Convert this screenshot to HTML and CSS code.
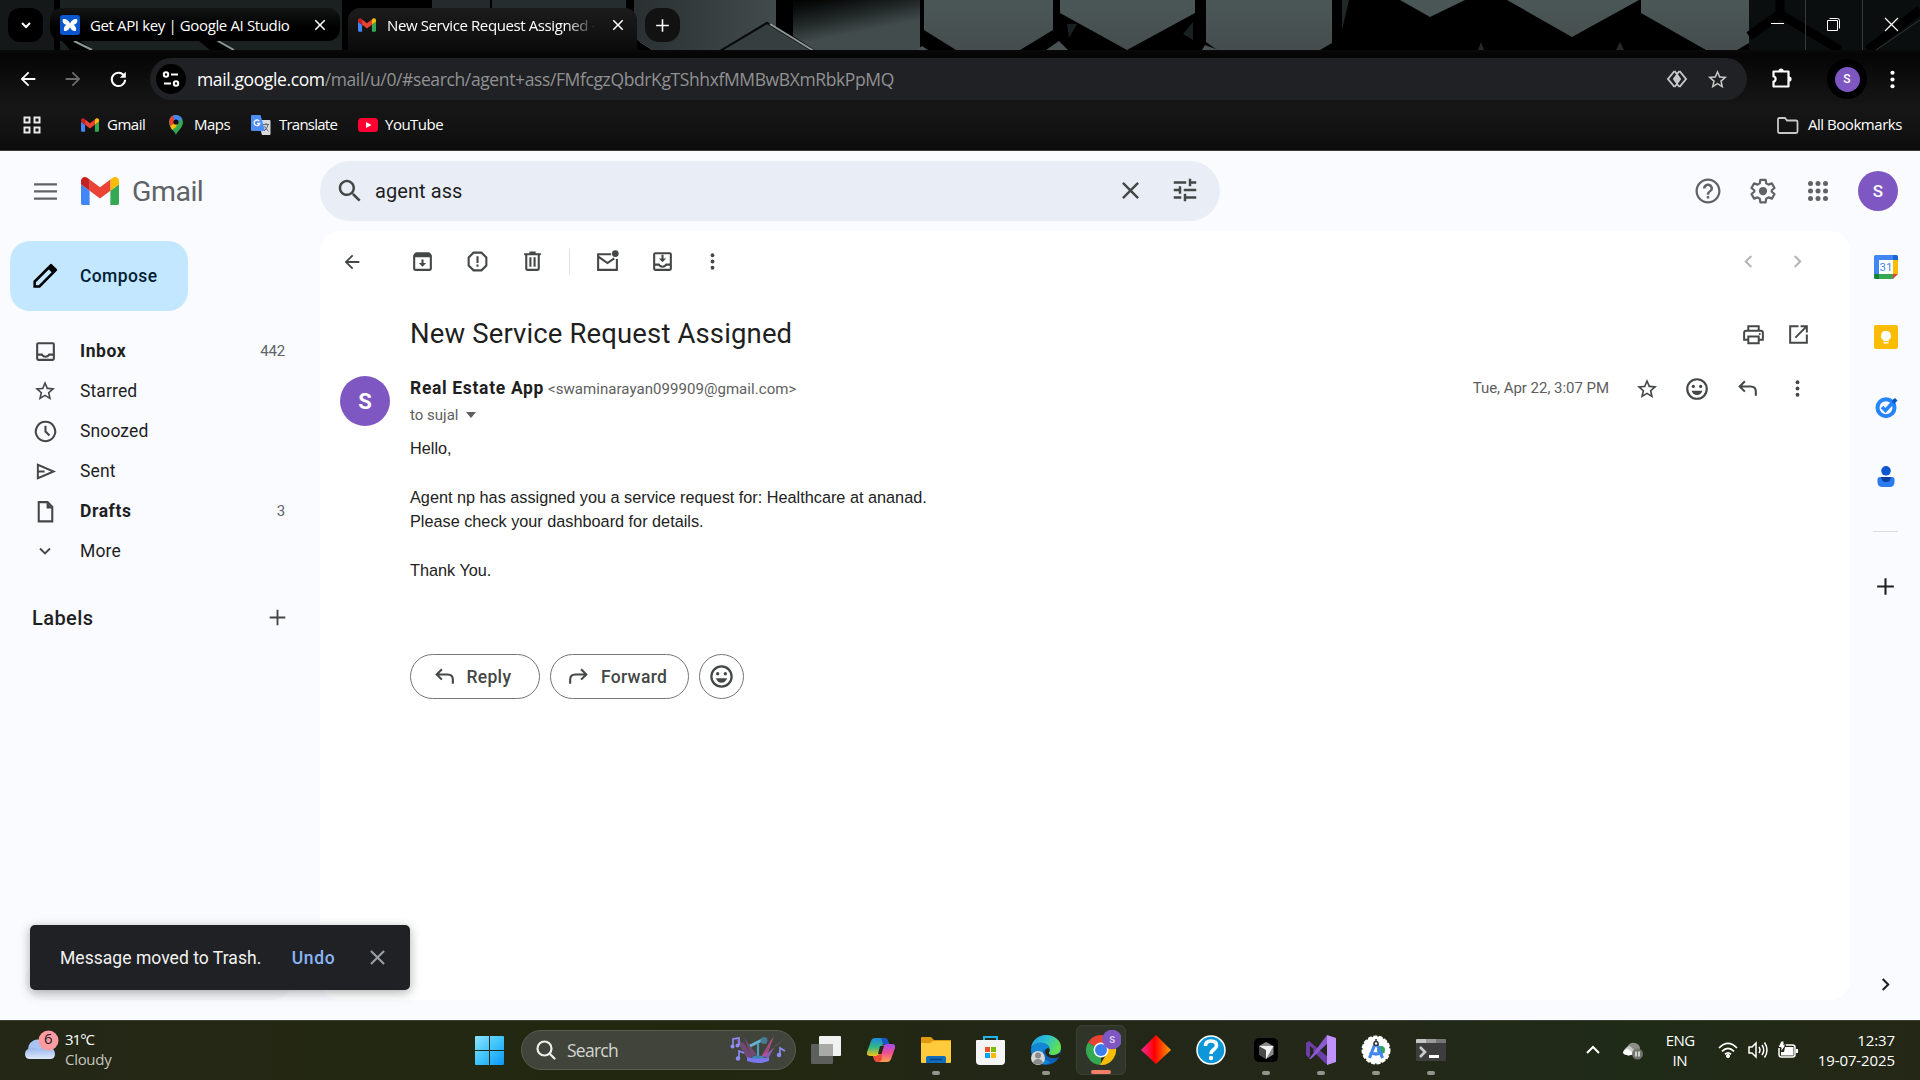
FILE: index.html
```html
<!DOCTYPE html>
<html lang="en">
<head>
<meta charset="utf-8">
<title>New Service Request Assigned - Gmail</title>
<link rel="stylesheet" href="styles.css">
</head>
<body>
<svg class="defs" width="0" height="0">
  <defs>
    <symbol id="gmail" viewBox="52 42 88 66">
      <path fill="#4285f4" d="M58 108h14V74L52 59v43c0 3.32 2.69 6 6 6"/><path fill="#34a853" d="M120 108h14c3.32 0 6-2.69 6-6V59l-20 15"/><path fill="#fbbc04" d="M120 48v26l20-15v-8c0-7.42-8.47-11.65-14.4-7.2"/><path fill="#ea4335" d="M72 74V48l24 18 24-18v26L96 92"/><path fill="#c5221f" d="M52 51v8l20 15V48l-5.6-4.2c-5.94-4.45-14.4-.22-14.4 7.2"/>
    </symbol>
    <symbol id="close" viewBox="0 0 24 24"><path d="M19 6.41 17.59 5 12 10.59 6.41 5 5 6.41 10.59 12 5 17.59 6.41 19 12 13.41 17.59 19 19 17.59 13.41 12z"/></symbol>
    <symbol id="star" viewBox="0 0 24 24"><path d="M22 9.24l-7.19-.62L12 2 9.19 8.63 2 9.24l5.46 4.73L5.82 21 12 17.27 18.18 21l-1.63-7.03L22 9.24zM12 15.4l-3.76 2.27 1-4.28-3.32-2.88 4.38-.38L12 6.1l1.71 4.04 4.38.38-3.32 2.88 1 4.28L12 15.4z"/></symbol>
    <symbol id="dots" viewBox="0 0 24 24"><circle cx="12" cy="5.5" r="2"/><circle cx="12" cy="12" r="2"/><circle cx="12" cy="18.5" r="2"/></symbol>
    <symbol id="back" viewBox="0 0 24 24"><path d="M20 11H7.83l5.59-5.59L12 4l-8 8 8 8 1.41-1.41L7.83 13H20v-2z"/></symbol>
    <symbol id="plus" viewBox="0 0 24 24"><path d="M20 13h-7v7h-2v-7H4v-2h7V4h2v7h7z"/></symbol>
    <symbol id="left" viewBox="0 0 24 24"><path d="M15.41 7.41 14 6l-6 6 6 6 1.41-1.41L10.83 12z"/></symbol>
    <symbol id="right" viewBox="0 0 24 24"><path d="M8.59 16.59 13.17 12 8.59 7.41 10 6l6 6-6 6z"/></symbol>
    <symbol id="reply" viewBox="0 0 24 24"><path fill="none" stroke="currentColor" stroke-width="2" d="M9.5 5 4.5 10l5 5M4.5 10H15c3 0 5 2 5 5v4"/></symbol>
    <symbol id="smile" viewBox="0 0 24 24"><circle cx="12" cy="12" r="9" fill="none" stroke="currentColor" stroke-width="2"/><circle cx="8.6" cy="9.6" r="1.5"/><circle cx="15.4" cy="9.6" r="1.5"/><path d="M7 13.5h10c-.7 2.400-2.600 4-5 4s-4.300-1.600-5-4z"/></symbol>
    <symbol id="search" viewBox="0 0 24 24"><path d="M15.500 14h-.79l-.28-.27C15.410 12.590 16 11.110 16 9.500 16 5.910 13.090 3 9.500 3S3 5.910 3 9.500 5.910 16 9.500 16c1.610 0 3.090-.59 4.230-1.570l.27.28v.79l5 4.990L20.490 19l-4.990-5zm-6 0C7.010 14 5 11.990 5 9.500S7.010 5 9.500 5 14 7.010 14 9.500 11.990 14 9.500 14z"/></symbol>
    <linearGradient id="winG" x1="0" y1="0" x2="1" y2="1"><stop offset="0" stop-color="#8fe3ff"/><stop offset=".5" stop-color="#3fc4fb"/><stop offset="1" stop-color="#0a96f6"/></linearGradient>
    <linearGradient id="plate" x1="0" y1="0" x2="0" y2="1"><stop offset="0" stop-color="#4b5757"/><stop offset="1" stop-color="#454d4e"/></linearGradient>
    <linearGradient id="plateDark" x1="0" y1="0" x2="1" y2="0"><stop offset="0" stop-color="#2a3031"/><stop offset="1" stop-color="#424b4c"/></linearGradient>
    <linearGradient id="plateShade" x1="0" y1="0" x2=".6" y2="1.200" ><stop offset="0" stop-color="#000"/><stop offset=".3" stop-color="#1c2121"/><stop offset=".6" stop-color="#424c4c"/></linearGradient>
  </defs>
</svg>

<div class="screen">
  <header class="browser">
    <div class="tabstrip">
      <svg class="wallpaper" viewBox="0 0 1920 50" width="1920" height="50">
        <rect width="1920" height="50" fill="#000"/>
        <path fill="#141818" d="M0 0h54v50H0z"/><path fill="#1b2020" d="M60 0h282v50H60z"/>
        <path d="m70 50-14-16 10-4 26 20zM210 50l-20-16h10l34 16z" fill="#000"/>
        <path d="m74 41 18 9M218 41l16 9M640 41l14 9" stroke="#8c9797" stroke-width="2"/>
        <path fill="#252b2c" d="M432 0h58v50h-58z"/><path fill="#262d2e" d="M492 0h134v50H492z"/>
        <path fill="url(#plateDark)" d="M634 0h142v28l-9-6-45 28h-70l-18-12z"/>
        <path fill="#363e3f" stroke="#090b0b" stroke-width="2" d="m720 51 47-28 46 28z"/><path d="m770 24 44 27" stroke="#8d9797" stroke-width="2"/>
        <path fill="url(#plateShade)" d="M793 0h127v50H815l-22-14z"/>
        <path fill="url(#plate)" d="M924 0h129v30l-33 20h-64l-32-20z"/>
        <path fill="#4a5253" d="m916 50 6-4 6 4zM1046 50l13-9 9 9zM1202 50l3-5 13 5z"/>
        <path fill="#192020" d="M1067 24h10l-8 14zM1183 34l10-12v18z"/>
        <path fill="url(#plate)" d="M1060 0h135v13l-68 37-67-37z"/>
        <path fill="url(#plate)" d="M1206 0h126v43l-12 7h-103l-11-8z"/>
        <path fill="#20282a" d="M1342 0h7l-7 30z"/>
        <path fill="url(#plate)" d="M1400 0h65l-35 17zM1507 0h132l-67 37zM1641 0h108v43l-12 7h-31l-65-37z"/>
        <path fill="#252b2b" d="m1478 50 3-8 3 8zM1616 50l4-8 4 8z"/>
        <path fill="#0b0e0e" d="M1749 0h171v50h-171z"/>
        <path fill="none" stroke="#000" stroke-width="9" d="M1780 0v14l60 36M1780 14l-31 22M1920 10l-52 40"/>
        <path stroke="#303636" d="m1876 50 44-30"/><path stroke="#343838" d="M1805.500 0v50M1862.500 0v50"/>
      </svg>
      <div class="tab-search"><svg width="12" height="12" viewBox="0 0 12 12"><path d="m2 4 4 4 4-4" fill="none" stroke="#fff" stroke-width="2"/></svg></div>
      <div class="tab tab-idle">
        <svg width="20" height="20" viewBox="0 0 20 20"><rect width="20" height="20" rx="3" fill="#0b57d0"/><path fill="#fff" d="M10 8.500C8.500 5 6 3.500 3 4c-1 2.500 0 5 3.500 5.800C4 11 3.600 14 4 16c3 .5 5-1 6-4 1 3 3 4.500 6 4 .4-2 0-5-2.500-6.200C17 9 18 6.500 17 4c-3-.5-5.500 1-7 4.500z"/></svg>
        <span class="tab-title">Get API key | Google AI Studio</span>
        <svg class="tab-x" width="18" height="18"><use href="#close"/></svg>
      </div>
      <div class="tab tab-active">
        <svg width="18" height="14"><use href="#gmail"/></svg>
        <span class="tab-title tab-title-active">New Service Request Assigned - </span>
        <svg class="tab-x" width="18" height="18"><use href="#close"/></svg>
      </div>
      <div class="newtab"><svg width="19" height="19"><use href="#plus"/></svg></div>
      <div class="caption">
        <svg width="57" height="50"><path d="M22 23.500h13" stroke="#fff"/></svg>
        <svg width="57" height="50"><path d="M21.500 20.500h10v10h-10zM23.500 18.500h8q2 0 2 2v8" stroke="#fff" fill="none"/></svg>
        <svg width="57" height="50"><path d="m22 18 13 13M35 18 22 31" stroke="#fff" stroke-width="1.200"/></svg>
      </div>
    </div>

    <div class="toolbar">
      <div class="nav"><svg width="22" height="22"><use href="#back"/></svg></div>
      <div class="nav nav-off"><svg class="flip" width="22" height="22"><use href="#back"/></svg></div>
      <div class="nav"><svg width="22" height="22" viewBox="0 0 24 24"><path fill="none" stroke="#fff" stroke-width="2.200" d="M18.700 8.500A7.300 7.300 0 1 0 19.800 12.800"/><path d="M20.500 4v6.500H14z"/></svg></div>
      <div class="omnibox">
        <div class="site"><svg width="20" height="20" viewBox="0 0 20 20" fill="none" stroke="#fff" stroke-width="2"><circle cx="5" cy="5.500" r="2.200"/><path d="M10 5.500h7M3 14.500h7"/><circle cx="15" cy="14.500" r="2.200"/></svg></div>
        <div class="url"><span class="host">mail.google.com</span><span class="path">/mail/u/0/#search/agent+ass/FMfcgzQbdrKgTShhxfMMBwBXmRbkPpMQ</span></div>
        <div class="omni-icon"><svg width="22" height="20" viewBox="0 0 22 20"><path d="m8.500 2-6.500 8 6.500 8M13.500 2l6.500 8-6.500 8M8.500 2l2.500 3 2.500-3M8.500 18l2.500-3 2.500 3" fill="none" stroke="#c7c7c7" stroke-width="1.900"/><path d="m11 4 4.200 6-4.200 6-4.200-6z" fill="#c7c7c7"/></svg></div>
        <div class="omni-icon"><svg width="23" height="23"><use href="#star"/></svg></div>
      </div>
      <div class="ext"><svg width="24" height="24" viewBox="0 0 24 24"><path fill="none" stroke="#fff" stroke-width="2.200" stroke-linejoin="round" d="M3.500 5.500h15v15h-15v-5c2.800 0 2.800-5 0-5z"/><path d="M8.500 5a2.600 2.600 0 0 1 5.200 0zM19 10.500a2.600 2.600 0 0 1 0 5.200z" fill="#fff"/></svg></div>
      <div class="profile"><span>S</span></div>
      <div class="kebab"><svg width="25" height="25"><use href="#dots"/></svg></div>
    </div>

    <div class="bookmarks">
      <svg class="grid-icon" width="18" height="18" viewBox="0 0 18 18" fill="none" stroke="#e8e8e8" stroke-width="2"><path d="M1.500 1.500h5v5h-5zM11.500 1.500h5v5h-5zM1.500 11.500h5v5h-5zM11.500 11.500h5v5h-5z"/></svg>
      <div class="bm bm-gmail"><svg width="18" height="14"><use href="#gmail"/></svg><span>Gmail</span></div>
      <div class="bm bm-maps"><svg width="14" height="20" viewBox="0 0 14 20"><path fill="#34a853" d="M7 20c-1-4-7-7-7-13a7 7 0 0 1 14 0c0 6-6 9-7 13z"/><path fill="#fbbc04" d="M1 10.500 11 3l-4 9-4 3z"/><path fill="#ea4335" d="M1.200 3.200A7 7 0 0 1 5 .3L7 7 1.500 11A9 9 0 0 1 1.200 3.200z"/><path fill="#4285f4" d="M4 .7a7 7 0 0 1 9 3L7 10z"/><circle cx="7" cy="7" r="2.600" fill="#111"/></svg><span>Maps</span></div>
      <div class="bm bm-translate"><svg width="20" height="20" viewBox="0 0 20 20"><path fill="#d8dadd" d="M7 5h11.500q1 0 1 1v13q0 1-1 1H11z"/><path fill="#4d8df5" d="M1 0h8.500l4.500 16H1q-1 0-1-1V1q0-1 1-1z"/><path fill="none" stroke="#fff" stroke-width="1.300" d="M8.300 6.200A2.800 2.800 0 1 0 8.700 8.500H6"/><path fill="none" stroke="#60656b" d="M12 9.500h6M15 8v1.500M17 10q-1 4-4 6M13.500 11q1 3 4 5"/></svg><span>Translate</span></div>
      <div class="bm"><svg width="20" height="14" viewBox="0 0 20 14"><rect width="20" height="14" rx="3.500" fill="#f03"/><path fill="#fff" d="m8 4 5.500 3L8 10z"/></svg><span>YouTube</span></div>
      <div class="bm bm-all"><svg width="22" height="17" viewBox="0 0 22 17"><path d="M1 2.500Q1 1 2.500 1H8l2 2.500h9q1.500 0 1.500 1.500v9.500Q20.500 16 19 16H2.500Q1 16 1 14.500z" fill="none" stroke="#c7c7c7" stroke-width="1.800"/></svg><span>All Bookmarks</span></div>
    </div>
  </header>

  <div class="gmail">
    <header class="g-head">
      <div class="brand">
        <svg width="29" height="29" viewBox="0 0 24 24"><path d="M2.500 5.100h19v1.900h-19zM2.500 11h19v1.900h-19zM2.500 17h19v1.900h-19z"/></svg>
        <svg class="brand-m" width="38" height="28.500"><use href="#gmail"/></svg>
        <span>Gmail</span>
      </div>
      <div class="search">
        <div class="s-btn"><svg width="30" height="30"><use href="#search"/></svg></div>
        <span class="query">agent ass</span>
        <div class="s-btn s-x"><svg width="29" height="29"><use href="#close"/></svg></div>
        <div class="s-btn s-tune"><svg width="30" height="30" viewBox="0 0 24 24"><path d="M3 17v2h6v-2H3zM3 5v2h10V5H3zm10 16v-2h8v-2h-8v-2h-2v6h2zM7 9v2H3v2h4v2h2V9H7zm14 4v-2H11v2h10zm-6-4h2V7h4V5h-4V3h-2v6z"/></svg></div>
      </div>
      <div class="account">
        <div><svg width="30" height="30" viewBox="0 0 24 24"><path d="M11 18h2v-2h-2v2zm1-16C6.480 2 2 6.480 2 12s4.480 10 10 10 10-4.480 10-10S17.520 2 12 2zm0 18.200c-4.500 0-8.200-3.700-8.200-8.200S7.500 3.800 12 3.800s8.200 3.700 8.200 8.200-3.700 8.200-8.200 8.200zM12 6c-2.210 0-4 1.790-4 4h2c0-1.100.9-2 2-2s2 .9 2 2c0 2-3 1.750-3 5h2c0-2.250 3-2.500 3-5 0-2.210-1.790-4-4-4z"/></svg></div>
        <div><svg width="30" height="30" viewBox="0 0 24 24"><path fill="none" stroke="currentColor" stroke-width="1.800" stroke-linejoin="round" d="m9.900 3-.5 2.900-1.800 1-2.700-1-2.100 3.700 2.200 1.800v1.200l-2.200 1.800 2.100 3.700 2.700-1 1.800 1 .5 2.900h4.200l.5-2.900 1.800-1 2.700 1 2.100-3.700-2.200-1.800v-1.200l2.200-1.800-2.100-3.700-2.700 1-1.800-1-.5-2.900z"/><circle cx="12" cy="12" r="3.300"/></svg></div>
        <div><svg width="30" height="30" viewBox="0 0 24 24"><circle cx="6" cy="6" r="2"/><circle cx="12" cy="6" r="2"/><circle cx="18" cy="6" r="2"/><circle cx="6" cy="12" r="2"/><circle cx="12" cy="12" r="2"/><circle cx="18" cy="12" r="2"/><circle cx="6" cy="18" r="2"/><circle cx="12" cy="18" r="2"/><circle cx="18" cy="18" r="2"/></svg></div>
        <div class="avatar avatar-me">S</div>
      </div>
    </header>

    <div class="g-body">
      <nav class="side">
        <div class="compose"><svg width="30" height="30" viewBox="0 0 24 24"><path d="m17.500 2.500 3.900 3.900q.7.700 0 1.400L8 21.300H2.700V16L16.100 2.500q.7-.7 1.400 0zM15 6.700 4.700 17v2.300H7L17.300 9z"/></svg><span>Compose</span></div>
        <ul>
          <li class="b"><i><svg width="25" height="25" viewBox="0 0 24 24"><path d="M19 3H5q-2 0-2 2v14q0 2 2 2h14q2 0 2-2V5q0-2-2-2zM5 5h14v9h-4q-.8 2-3 2t-3-2H5zm0 14v-3h3q1.300 2 4 2t4-2h3v3z"/></svg></i><span>Inbox</span><em>442</em></li>
          <li><i><svg width="24" height="24"><use href="#star"/></svg></i><span>Starred</span></li>
          <li><i><svg width="25" height="25" viewBox="0 0 24 24"><path fill="none" stroke="currentColor" stroke-width="2" d="M12 2.700a9.300 9.300 0 1 0 .01 0zM12 6.500V12l3.800 3.800"/></svg></i><span>Snoozed</span></li>
          <li><i><svg width="23" height="23" viewBox="0 0 24 24"><path fill="none" stroke="currentColor" stroke-width="2" d="M4 5v14l16.500-7zM4.500 12H11"/></svg></i><span>Sent</span></li>
          <li class="b"><i><svg width="25" height="25" viewBox="0 0 24 24"><path fill="none" stroke="currentColor" stroke-width="2" d="M14 3H5.500v18.500h13V7.500z"/><path d="M13 3v6h6z"/></svg></i><span>Drafts</span><em>3</em></li>
          <li><i><svg width="24" height="24" viewBox="0 0 24 24"><path fill="none" stroke="currentColor" stroke-width="1.900" d="m7 9.500 5 5 5-5"/></svg></i><span>More</span></li>
        </ul>
        <div class="labels"><span>Labels</span><svg width="25" height="25" viewBox="0 0 24 24"><path d="M19.500 12.900h-6.600v6.600h-1.800v-6.600H4.500v-1.800h6.600V4.500h1.800v6.600h6.600z"/></svg></div>
      </nav>

      <main class="mail">
        <div class="actions">
          <div class="a1"><svg width="22" height="22"><use href="#back"/></svg></div>
          <div><svg width="25" height="25" viewBox="0 0 24 24"><path d="m20.500 5.200-1.400-1.700Q18.700 3 18 3H6q-.7 0-1.100.5L3.500 5.200Q3 5.800 3 6.500V19q0 2 2 2h14q2 0 2-2V6.500q0-.7-.5-1.300zM5 19V8h14v11zm8-9h-2v3.500H8.500L12 17l3.500-3.500H13z"/></svg></div>
          <div><svg width="25" height="25" viewBox="0 0 24 24"><path fill="none" stroke="currentColor" stroke-width="2" d="M8.200 3.500h7.600l4.700 4.700v7.600l-4.700 4.700H8.200l-4.700-4.700V8.200z"/><path d="M11 7h2v6.500h-2zM11 15h2v2h-2z"/></svg></div>
          <div><svg width="25" height="25" viewBox="0 0 24 24"><path d="M15 4V2.500H9V4H4v2h1v13q0 2 2 2h10q2 0 2-2V6h1V4zM7 6h10v13H7zm2 2v9h2V8zm4 0v9h2V8z"/></svg></div>
          <hr>
          <div><svg width="25" height="25" viewBox="0 0 24 24"><path fill="none" stroke="currentColor" stroke-width="2" d="M15.500 5H3v15h18V9.500M3.500 7.500l8.500 6 6.500-4.500"/><circle cx="19.500" cy="4.500" r="3.200"/></svg></div>
          <div><svg width="25" height="25" viewBox="0 0 24 24"><path d="M19 3H5q-2 0-2 2v14q0 2 2 2h14q2 0 2-2V5q0-2-2-2zM5 5h14v9h-4q-.8 2-3 2t-3-2H5zm0 14v-3h3q1.300 2 4 2t4-2h3v3zM11 5.500h2V9h2.500L12 12.700 8.500 9H11z"/></svg></div>
          <div class="a-more"><svg width="23" height="23"><use href="#dots"/></svg></div>
          <div class="a-nav a-first"><svg width="25" height="25"><use href="#left"/></svg></div>
          <div class="a-nav"><svg width="25" height="25"><use href="#right"/></svg></div>
        </div>

        <div class="subject">
          <h1>New Service Request Assigned</h1>
          <div><svg width="25" height="25" viewBox="0 0 24 24"><path fill="none" stroke="currentColor" stroke-width="1.900" d="M7 8V4h10v4M6.500 17H3v-6.500Q3 8.500 5 8.500h14q2 0 2 2V17h-3.500M7 14h10v6.500H7z"/><circle cx="18" cy="11.500" r="1"/></svg></div>
          <div><svg width="25" height="25" viewBox="0 0 24 24"><path fill="none" stroke="currentColor" stroke-width="1.900" d="M12 4H4v16h16v-8M14 4h6v6M20 4 9 15"/></svg></div>
        </div>

        <div class="sender">
          <div class="avatar avatar-big">S</div>
          <div class="who">
            <p><b>Real Estate App</b><span class="addr">&lt;swaminarayan099909@gmail.com&gt;</span></p>
            <p class="to">to sujal <svg width="12" height="6" viewBox="0 0 12 6"><path d="M1 0h10L6 6z"/></svg></p>
          </div>
          <span class="date">Tue, Apr 22, 3:07 PM</span>
          <div class="tools">
            <div><svg width="24" height="24"><use href="#star"/></svg></div>
            <div><svg width="26" height="26"><use href="#smile"/></svg></div>
            <div><svg width="25" height="25"><use href="#reply"/></svg></div>
            <div><svg width="23" height="23"><use href="#dots"/></svg></div>
          </div>
        </div>

        <div class="text">Hello,<br><br>Agent np has assigned you a service request for: Healthcare at ananad.<br>Please check your dashboard for details.<br><br>Thank You.</div>

        <div class="buttons">
          <div class="btn btn-reply"><svg width="25" height="25"><use href="#reply"/></svg><span>Reply</span></div>
          <div class="btn btn-fwd"><svg class="flip" width="25" height="25"><use href="#reply"/></svg><span>Forward</span></div>
          <div class="btn btn-emoji"><svg width="27" height="27"><use href="#smile"/></svg></div>
        </div>
      </main>

      <aside class="panel">
        <svg width="24" height="24" viewBox="0 0 24 24"><path fill="#4285f4" d="M1.500 0H19v5H5v14H0V1.500Q0 0 1.500 0z"/><path fill="#1967d2" d="M19 0h3.500Q24 0 24 1.500V5h-5z"/><path fill="#fbbc04" d="M19 5h5v14h-5z"/><path fill="#34a853" d="M5 19h14v5H5z"/><path fill="#188038" d="M0 19h5v5H1.500Q0 24 0 22.500z"/><path fill="#ea4335" d="M19 24v-5h5z"/><path fill="#fff" d="M5 5h14v14H5z"/><text x="12" y="16.200" text-anchor="middle" font-family="Roboto,sans-serif" font-size="11.500" fill="#4285f4">31</text></svg>
        <svg width="24" height="24" viewBox="0 0 24 24"><rect width="24" height="24" rx="2" fill="#fbbc04"/><path fill="#fff" d="M12 5.800a5 5 0 0 0-2.700 9.200v1h5.400v-1A5 5 0 0 0 12 5.800zM9.500 17h5v1.500h-5z"/></svg>
        <svg width="24" height="24" viewBox="0 0 24 24"><circle cx="12" cy="12.700" r="8.500" fill="none" stroke="#2684fc" stroke-width="4"/><path d="m8 12 3.500 3.500L21 5" fill="none" stroke="#2684fc" stroke-width="3.600"/><path d="m18 6 3-3 2.500 2.500L20 9z" fill="#0a54c4"/></svg>
        <svg width="24" height="24" viewBox="0 0 24 24"><circle cx="12" cy="5.800" r="4.800" fill="#0b57d0"/><path d="M3.500 14.500q0-2.500 2.500-2.500h12q2.500 0 2.500 2.500V17q0 5-5 5h-7q-5 0-5-5z" fill="#2a7bf0"/><path d="M12 12h4.800q0 5-4.800 5t-4.800-5z" fill="#0b3f9e"/></svg>
        <hr>
        <svg class="panel-plus" width="25" height="25"><use href="#plus"/></svg>
        <svg class="panel-next" width="25" height="25"><use href="#right"/></svg>
      </aside>
    </div>

    <div class="status"></div>
    <div class="toast"><span>Message moved to Trash.</span><a>Undo</a><svg width="25" height="25"><use href="#close"/></svg></div>
  </div>

  <footer class="taskbar">
    <div class="weather">
      <svg width="36" height="32" viewBox="0 0 36 32"><defs><linearGradient id="cl" x1="0" y1="0" x2="0" y2="1"><stop offset="0" stop-color="#8fb0ec"/><stop offset="1" stop-color="#dfeafb"/></linearGradient></defs><path fill="#a9c3f2" d="M5 23a9 9 0 0 1 17-8l6 7z"/><path fill="url(#cl)" d="M7 18q5-1 7 3 4-6 10-4 7 1 7 7 0 5-5 5H6q-5 0-5-5 0-5 6-6z"/><circle cx="24.500" cy="10.500" r="10" fill="#ff9ba3"/></svg>
      <span class="alert">6</span>
      <div><p>31°C</p><p class="dim">Cloudy</p></div>
    </div>
    <svg class="start" width="29" height="29" viewBox="0 0 29 29"><path fill="url(#winG)" d="M1 0h13v14H0V1q0-1 1-1zM15 0h13q1 0 1 1v13H15zM0 15h14v14H1q-1 0-1-1zM15 15h14v13q0 1-1 1H15z"/></svg>
    <div class="tb-search">
      <svg width="20" height="20" viewBox="0 0 20 20" fill="none" stroke="#eee" stroke-width="2.200"><circle cx="8.500" cy="8.500" r="7"/><path d="m13.500 13.500 5 5" stroke-linecap="round"/></svg>
      <span>Search</span>
      <svg width="56" height="28" viewBox="0 0 56 28"><path fill="#6f4a72" d="m14 1 13 18-6 2zM5 2l10 6 7 14-6-1z"/><path fill="#d4549f" d="M44 0 32 20l4 1z"/><path fill="#8a5cae" d="m55 2-10 8-6 11h-6z"/><path fill="#a04a84" d="m42 2-4 14-7 5z"/><path stroke="#69b4d0" stroke-width="3" d="m20 10 12-6" fill="none"/><circle cx="34" cy="4.500" r="3.500" fill="#477b96"/><path d="M28 7v16" stroke="#4f9bc0" stroke-width="2.200"/><ellipse cx="28" cy="21.500" rx="6" ry="2" fill="#3e86ac"/><path fill="#7a78f0" d="M17 21q11 3 22 0v4q-11 4-22 0z"/><path fill="none" stroke="#8c8dfa" stroke-width="1.600" d="M3 10V3l6-1v7M9 22v-7l5 2M50 19v-7l5 3"/><g fill="#8c8dfa"><circle cx="2.500" cy="10.500" r="2"/><circle cx="7.500" cy="9.500" r="2"/><circle cx="8" cy="22.500" r="2.200"/><circle cx="49" cy="19" r="2.200"/></g></svg>
    </div>
    <div class="apps">
      <div><svg width="30" height="30" viewBox="0 0 30 30"><rect x="8" y="1" width="22" height="20" rx="1" fill="#f1f1f1"/><rect y="9" width="22" height="20" rx="1" fill="#5d5f5c"/><path fill="#a9aaa8" d="M8 9h14v12H8z"/></svg></div>
      <div><svg width="28" height="26" viewBox="0 0 28 26"><defs><linearGradient id="c1" x1="0" y1="0" x2="0" y2="1"><stop offset="0" stop-color="#1f87e0"/><stop offset=".5" stop-color="#2fb887"/><stop offset="1" stop-color="#f5c21a"/></linearGradient><linearGradient id="c2" x1="0" y1="0" x2="0" y2="1"><stop offset="0" stop-color="#a04bf0"/><stop offset=".5" stop-color="#f0508d"/><stop offset="1" stop-color="#fda14e"/></linearGradient></defs><path fill="url(#c1)" d="M8 1h10q2 0 3 3l1 3h-6l-3 9q-1 3-4 3H3q-4 0-3-4L4 4q1-3 4-3z"/><path fill="#1658c4" d="M14 1h4q2 0 3 3l1 3h-6z"/><path fill="url(#c2)" d="M20 7h5q4 0 3 4l-4 11q-1 3-4 3H10q-2 0-3-3l-1-3h3q3 0 4-3l2-6q1-3 5-3z"/><path fill="#ee4b34" d="M6 19h3q3 0 4-3l1-3 1 9q-1 3-3 3h-2q-2 0-3-3z"/><path fill="#242716" d="M13 9h4l-2.500 8H11z"/></svg></div>
      <div class="run"><svg width="30" height="26" viewBox="0 0 30 26"><path fill="#e09a10" d="M0 1q0-1 1-1h9l3 3h17v8H0z"/><path fill="#ffcb3d" d="M0 6h9l3-2h17q1 0 1 1v20q0 1-1 1H1q-1 0-1-1z"/><path fill="#0f6cbf" d="M5 26v-5q0-2 2-2h16q2 0 2 2v5z"/><path stroke="#0b3f80" stroke-width="1.500" d="M9 22.500h12"/></svg></div>
      <div><svg width="29" height="29" viewBox="0 0 29 29"><path d="M8 6V1h13v5" fill="none" stroke="#22b5ea" stroke-width="2"/><path fill="#f5f5f5" d="M0 5q0-1 1-1h27q1 0 1 1v20q0 4-4 4H4q-4 0-4-4z"/><path fill="#f1502b" d="M9 11h5v5H9z"/><path fill="#7fba00" d="M15 11h5v5h-5z"/><path fill="#00a4ef" d="M9 17h5v5H9z"/><path fill="#ffb900" d="M15 17h5v5h-5z"/></svg></div>
      <div class="run"><svg width="30" height="30" viewBox="0 0 30 30"><defs><linearGradient id="e1" x1="0" y1="0" x2="1" y2=".4"><stop offset="0" stop-color="#1f9be0"/><stop offset=".5" stop-color="#2bbfd6"/><stop offset="1" stop-color="#62e04f"/></linearGradient></defs><circle cx="15" cy="15" r="15" fill="#0d60b8"/><path fill="#1287d6" d="M0 14Q3 7 11 8q6 1 7 6-5-1-6 4 0 8 8 9-6 4-12 1Q0 24 0 14z"/><path fill="url(#e1)" d="M0 13C1 5 8 0 15 0c9 0 15 6 15 12 0 6-4 8-9 8-4 0-4-2-3-3 2-3 0-8-6-9C6 7 2 10 0 13z"/><path fill="#242716" d="M17 13q3 2 1 4-1 3 4 3.300 4 0 8-3-.5 3-2 5-5 2-10 0-5-3-3.500-8z"/><circle cx="7" cy="23" r="7" fill="#d7d7d7"/><circle cx="7" cy="20.500" r="3" fill="#8b8b8b"/><path fill="#8b8b8b" d="M2 28q1-4 5-4t5 4q-5 3-10 0z"/></svg></div>
      <div class="run current"><svg width="40" height="40" viewBox="0 0 40 40"><path fill="#ea4335" d="M20 20 7 12.500a15 15 0 0 1 26 0z"/><path fill="#34a853" d="M20 20v15a15 15 0 0 1-13-22.500z"/><path fill="#fbbc04" d="M20 20l13-7.500A15 15 0 0 1 19 35l7-12z"/><circle cx="20" cy="20" r="7.500" fill="#fff"/><circle cx="20" cy="20" r="6" fill="#3b7ded"/><circle cx="31" cy="9.500" r="9.800" fill="#7e57c2"/><text x="31" y="13" text-anchor="middle" font-size="9.500" font-weight="700" font-family="Roboto,sans-serif" fill="#d9cbef">S</text></svg></div>
      <div><svg width="30" height="30" viewBox="0 0 30 30"><defs><linearGradient id="r"><stop offset="0" stop-color="#ff2a9c"/><stop offset=".45" stop-color="#f00"/><stop offset="1" stop-color="#ffa000"/></linearGradient></defs><path fill="url(#r)" d="m15 0 15 15-15 14L0 15z"/></svg></div>
      <div><svg width="30" height="30" viewBox="0 0 30 30"><circle cx="15" cy="15" r="14" fill="#0d97d8" stroke="#fff" stroke-width="1.500"/><path fill="none" stroke="#fff" stroke-width="3.600" d="M9.500 11q0-5 5.500-5t5.500 4.500c0 4-5.500 4-5.500 8.500"/><circle cx="15" cy="23" r="2.200" fill="#fff"/></svg></div>
      <div class="run"><svg width="24" height="24" viewBox="0 0 24 24"><rect width="24" height="24" rx="5" fill="#000"/><path fill="#8a8a8a" d="m12 4 7.500 4v8.500L12 21l-7-4.500V8z"/><path fill="#4a4a4a" d="m5 8 7 4v9l-7-4.500z"/><path fill="#f2f2f2" d="M19.500 8 12 21v-9L5 8z"/></svg></div>
      <div class="run"><svg width="30" height="30" viewBox="0 0 30 30"><path fill="#6a3fa8" d="m0 8 3-2 20 17-1 7-3-2L4 13v8l-1 2-3-3z"/><path fill="#8b5bd0" d="M3 24 21 0l3 6L5 24z"/><path fill="#c192fb" d="m21 0 9 3v24l-9 3z"/><path fill="#242716" d="M4 11v7l4-3.500z"/></svg></div>
      <div class="run"><svg width="30" height="30" viewBox="0 0 30 30"><circle cx="15" cy="15" r="13.500" fill="#fff" stroke="#fff" stroke-width="2" stroke-dasharray="4 1.500"/><circle cx="20" cy="15" r="4" fill="#2fa85a"/><path fill="none" stroke="#4285f4" stroke-width="3.200" d="M14 9 8.500 23M16 9l5.500 14M9 17q6 4 12 0"/><circle cx="15" cy="8.500" r="2" fill="#fff" stroke="#333" stroke-width="1.500"/><path stroke="#333" stroke-width="1.500" d="M15 4v3"/></svg></div>
      <div class="run"><svg width="30" height="22" viewBox="0 0 30 22"><rect width="30" height="22" rx="1.500" fill="#3d3d3d"/><path fill="#c6c6c6" d="M0 4V1q0-1 1-1h9v4z"/><path fill="#9b9b9b" d="M10 0h10v4H10z"/><path fill="#757575" d="M20 0h9q1 0 1 1v3H20z"/><path d="m4 8 5 5-5 5" fill="none" stroke="#ccc" stroke-width="2.600"/><path d="M13 17.500h10" stroke="#fff" stroke-width="3"/></svg></div>
    </div>
    <div class="tray">
      <svg class="t-up" width="14" height="10" viewBox="0 0 14 10"><path d="m1 8 6-6 6 6" fill="none" stroke="#fff" stroke-width="2"/></svg>
      <svg class="t-cloud" width="20" height="18" viewBox="0 0 20 18"><path fill="#8b8f88" d="M4 5q3-5 8-4 5 1 5 6l-5 5z"/><path fill="#c9ccc6" d="M1 9q1-4 6-5l7 7-9 3z"/><path fill="#fff" d="M0 10q1-3 5-3l8 6H4q-4 0-4-3z"/><circle cx="14.500" cy="12" r="5.500" fill="#73746f"/><path stroke="#fff" stroke-width="1.300" d="M13 9.500v5M16 9.500v5"/></svg>
      <div class="lang">ENG<br>IN</div>
      <svg class="t-wifi" width="20" height="16" viewBox="0 0 20 16" fill="none" stroke="#fff" stroke-width="1.700"><path d="M1 6q9-9 18 0M4 9.300q6-6 12 0M7 12.300q3-3 6 0"/><circle cx="10" cy="14" r="1.200" fill="#fff"/></svg>
      <svg class="t-vol" width="20" height="18" viewBox="0 0 20 18" fill="none" stroke="#fff" stroke-width="1.500"><path d="M1 6h3l4-4v14l-4-4H1zM11 6q2 3 0 6M14 4q3.500 5 0 10M16.500 1.500q5 7.500 0 15"/></svg>
      <svg class="t-bat" width="20" height="17" viewBox="0 0 20 17"><rect x="1" y="4" width="16" height="12" rx="2.500" fill="none" stroke="#fff" stroke-width="1.500"/><path fill="#fff" d="M7 6h8.500v8.500H3V11h3zM18 8h2v4h-2z"/><path fill="#fff" stroke="#242716" d="M3 0h3v4h2l-5 7V6.500H0z"/></svg>
      <div class="clock">12:37<br>19-07-2025</div>
    </div>
  </footer>
</div>
</body>
</html>
```
FILE: styles.css
```css
* { box-sizing: border-box; }
body { margin: 0; overflow: hidden; font-family: Roboto, "Liberation Sans", sans-serif; }
p, ul, h1 { margin: 0; padding: 0; font-weight: 400; }
svg { display: block; flex: none; fill: currentColor; }
svg[fill="none"] { fill: none; }
.defs { position: absolute; }
.flip { transform: scaleX(-1); }
.screen { width: 1920px; height: 1080px; display: flex; flex-direction: column; }

/* Browser frame */
.browser { height: 151px; background: linear-gradient(#0b0b0b 33%, #050505 36%, #0f0f0f 55%, #161616 72%, #121212 88%, #0b0b0b); border-bottom: 1px solid #3c3c3c; color: #fff; font-family: "Open Sans", "Noto Sans", sans-serif; }
.tabstrip { position: relative; height: 50px; display: flex; align-items: flex-start; padding: 8px 0 0 8px; }
.tabstrip > * { position: relative; }
.tabstrip > .wallpaper { position: absolute; left: 0; top: 0; }
.tab-search { width: 35px; height: 34px; border-radius: 12px; background: #000; display: grid; place-items: center; }
.tab { display: flex; align-items: center; font-size: 15px; letter-spacing: -.37px; white-space: nowrap; }
.tab-idle { width: 290px; height: 33px; margin-left: 7px; padding-left: 10px; border-radius: 12px; background: linear-gradient(#131515, #000 60%); }
.tab-active { width: 289px; height: 42px; margin-left: 8px; padding: 0 0 8px 10px; border-radius: 12px 12px 0 0; background: linear-gradient(#1c1c1c, #0b0b0b); letter-spacing: -.4px; }
.tab-title { width: 209px; margin-left: 10px; overflow: hidden; }
.tab-active .tab-title { margin-left: 11px; margin-right: 1px; }
.tab-title-active { -webkit-mask-image: linear-gradient(90deg, #000 86%, transparent); mask-image: linear-gradient(90deg, #000 86%, transparent); }
.tab-x { margin-left: 12px; }
.newtab { width: 35px; height: 34px; margin-left: 8px; border-radius: 14px; background: #121212; display: grid; place-items: center; }
.caption { display: flex; margin: -8px 0 0 auto; }
.caption svg { fill: none; }

.toolbar { height: 55px; display: flex; align-items: center; padding: 3px 0 0 5px; }
.nav { width: 45px; display: grid; place-items: center; }
.nav-off { color: #6c6c6c; }
.omnibox { width: 1597px; height: 42px; margin-left: 10px; border-radius: 21px; background: #202124; display: flex; align-items: center; padding: 0 10px 0 6px; color: #c7c7c7; }
.site { width: 30px; height: 30px; border-radius: 50%; background: #000; display: grid; place-items: center; }
.url { flex: 1; margin-left: 11px; font-size: 17.500px; letter-spacing: -.38px; white-space: nowrap; }
.host { color: #fff; }
.path { color: #909193; }
.omni-icon { width: 40px; display: grid; place-items: center; }
.ext { width: 60px; margin-left: 5px; padding-bottom: 2px; display: grid; place-items: center; }
.profile { width: 40px; height: 40px; margin-left: 15px; border-radius: 50%; background: #000; display: grid; place-items: center; }
.profile span { width: 25px; height: 25px; border-radius: 50%; background: #7e57c2; font: 500 12px/25px Roboto, sans-serif; text-align: center; }
.kebab { margin-left: 12.500px; }

.bookmarks { height: 45px; display: flex; align-items: center; padding: 0 18px 5px 23px; font-size: 15px; letter-spacing: -.5px; }
.bm { display: flex; align-items: center; gap: 7px; }
.bm span { padding-bottom: 2px; }
.bm-gmail { width: 88px; margin-left: 40px; gap: 8px; }
.bm-maps { width: 82px; gap: 11px; }
.bm-translate { width: 107px; gap: 8px; letter-spacing: -.77px; }
.bm-all { margin-left: auto; gap: 9px; letter-spacing: -.45px; }

/* Mail client */
.gmail { position: relative; height: 869px; background: #f9fbff; color: #444746; display: flex; flex-direction: column; }
.g-head { height: 80px; display: flex; align-items: center; }
.brand { width: 320px; display: flex; align-items: center; padding-left: 30.500px; color: #5f6368; font-size: 28.500px; letter-spacing: -.5px; }
.brand-m { margin: 0 13px 0 21.500px; }
.search { width: 900px; height: 60px; border-radius: 30px; background: #e9eef6; display: flex; align-items: center; }
.s-btn { width: 55px; display: grid; place-items: center; padding-left: 5px; }
.query { color: #1f1f1f; font-size: 20px; letter-spacing: .08px; }
.s-x { margin-left: auto; padding: 0 0 2px; }
.s-tune { margin-right: 7.500px; padding: 0 0 2px; }
.account { margin-left: auto; display: flex; align-items: center; padding-right: 22px; color: #5f6368; }
.account > div { width: 55px; display: grid; place-items: center; }
.avatar { flex: none; border-radius: 50%; background: #7e57c2; color: #fff; display: grid; place-items: center; font-weight: 500; }
.account > .avatar-me { width: 40px; height: 40px; margin-left: 12.500px; font-size: 17px; }
.g-body { flex: 1; display: flex; padding-bottom: 20px; }

.side { width: 320px; padding: 10px 35px 0 0; }
.compose { width: 178px; height: 70px; margin-left: 10px; padding-left: 20px; border-radius: 20px; background: #c2e7ff; color: #001d35; display: flex; align-items: center; gap: 20px; font-size: 17.500px; font-weight: 500; letter-spacing: .38px; }
.compose svg { color: #000; }
.side ul { margin-top: 20px; list-style: none; }
.side li { height: 40px; display: flex; align-items: center; font-size: 17.500px; letter-spacing: .12px; color: #1f1f1f; }
.side i { width: 90px; margin-right: -10px; display: grid; place-items: center; color: #444746; }
.side .b span { font-weight: 700; letter-spacing: .58px; }
.side em { margin-left: auto; font-style: normal; font-size: 15px; letter-spacing: -.2px; color: #5f6368; }
.labels { display: flex; align-items: center; justify-content: space-between; margin: 34px -5px 0 0; padding-left: 32px; font-size: 20px; font-weight: 500; letter-spacing: .4px; color: #1f1f1f; }
.labels svg { color: #444746; }

.mail { width: 1530px; border-radius: 20px; background: #fff; }
.actions { height: 60px; display: flex; align-items: center; padding: 1px 0 0 4.500px; }
.actions > div { width: 55px; display: grid; place-items: center; }
.actions .a1 { margin-right: 15px; }
.actions hr { width: 1px; height: 25px; margin: 0 9.500px; border: 0; background: #dfe1e5; }
.actions .a-more { width: 45px; }
.actions .a-nav { width: 49px; color: #b4b5b6; }
.actions .a-first { margin-left: auto; }
.actions .a-nav:last-child { margin-right: 28.500px; }
.subject { display: flex; align-items: center; height: 86px; padding: 0 29px 0 90px; }
.subject h1 { margin-right: auto; padding-bottom: 2px; font-size: 27.500px; letter-spacing: .13px; color: #1f1f1f; }
.subject div { width: 45px; display: grid; place-items: center; }
.sender { display: flex; height: 58px; padding: 0 28px 0 20px; font-size: 15px; color: #5e5e5e; }
.avatar-big { width: 50px; height: 50px; margin: -1px 20px 0 0; font-size: 22px; font-weight: 700; }
.who p { height: 25px; line-height: 22px; white-space: nowrap; }
.who b { margin-right: 4px; font-size: 17.500px; letter-spacing: .67px; color: #1f1f1f; }
.addr { letter-spacing: .05px; }
.who .to { display: flex; align-items: center; gap: 7px; }
.date { margin-left: auto; line-height: 22px; letter-spacing: -.03px; }
.tools { display: flex; height: 23px; align-items: center; margin-left: 13px; color: #444746; }
.tools div { width: 50px; display: grid; place-items: center; }
.text { padding-top: 1px; margin-left: 90px; font: 16.250px/24.400px "Liberation Sans", Arial, sans-serif; color: #222; }
.buttons { display: flex; gap: 10px; margin: 72px 0 0 90px; }
.btn { height: 45px; border: 1px solid #747775; border-radius: 23px; display: flex; align-items: center; color: #444746; font-size: 17.500px; font-weight: 500; letter-spacing: .3px; }
.btn-reply { width: 130px; padding-left: 21px; gap: 9.500px; }
.btn-fwd { width: 139px; padding-left: 15px; gap: 10px; }
.btn-emoji { width: 45px; justify-content: center; }

.panel { width: 70px; display: flex; flex-direction: column; align-items: center; padding: 24px 0 0 1px; gap: 46px; color: #1f1f1f; }
.panel hr { width: 25px; height: 1px; margin: -4px 0 -4px; border: 0; background: #dadce0; }
.panel-next { margin-top: auto; margin-bottom: 3px; }

.status { position: absolute; left: 25px; bottom: 20px; width: 267px; height: 40px; border-radius: 20px; background: #f4f6f8; }
.toast { position: absolute; left: 30px; bottom: 30px; width: 380px; height: 65px; border-radius: 5px; background: #202124; box-shadow: 0 2px 8px rgba(60, 64, 67, .3), 0 4px 14px rgba(60, 64, 67, .15); display: flex; align-items: center; padding-left: 30px; color: #f2f2f2; font-size: 17.500px; letter-spacing: .04px; }
.toast a { margin: 0 24px 0 30.500px; color: #8ab4f8; font-weight: 500; letter-spacing: .6px; }
.toast svg { margin-left: 5.500px; color: #9aa0a6; }

/* Taskbar */
.taskbar { height: 60px; background: linear-gradient(90deg, #242716, #22280f 35%, #222718 55%, #242818 70%, #1f2a17 85%, #252716); border-top: 1px solid #3d4038; display: flex; align-items: center; color: #fff; font: 15px/20px "Open Sans", "Noto Sans", sans-serif; letter-spacing: -.15px; }
.weather { position: relative; width: 475px; display: flex; padding: 0 0 4px 24px; gap: 5px; align-items: center; }
.weather p:first-child { letter-spacing: -1px; }
.weather svg { margin-top: -6px; }
.weather .dim { color: #c3c4bf; letter-spacing: -.3px; }
.alert { position: absolute; left: 44px; top: -1px; color: #222; }
.start { margin-right: 17px; }
.tb-search { width: 275px; height: 40px; margin-bottom: 1px; border: 1px solid #5a5d50; border-radius: 20px; background: #41443a; display: flex; align-items: center; padding: 0 9px 0 14px; font-size: 17.500px; letter-spacing: -.75px; color: #d4d5d1; }
.tb-search span { margin: 0 auto 0 11px; }
.apps { display: flex; margin: 0 0 1px 2px; }
.apps > div { position: relative; width: 55px; height: 50px; display: grid; place-items: center; }
.apps .run::after { content: ""; position: absolute; left: 23.500px; bottom: 0; width: 8px; height: 4px; border-radius: 2px; background: #92958c; }
.apps .current { width: 50px; margin: 0 2.500px; border: 1px solid #3c4034; border-radius: 6px; background: #30352a; }
.apps .current::after { left: 14px; width: 20px; background: #f4806a; }
.tray { display: flex; align-items: center; margin-left: auto; padding: 0 25px 2px 0; }
.t-up { margin-right: 23px; }
.t-cloud { margin-right: 23px; margin-top: 2px; }
.lang { width: 28px; margin-right: 24px; text-align: center; letter-spacing: -.5px; }
.t-wifi { margin-right: 10px; }
.t-vol { margin-right: 10px; }
.t-bat { margin-right: 20px; }
.clock { text-align: right; white-space: nowrap; letter-spacing: -.1px; }
```
